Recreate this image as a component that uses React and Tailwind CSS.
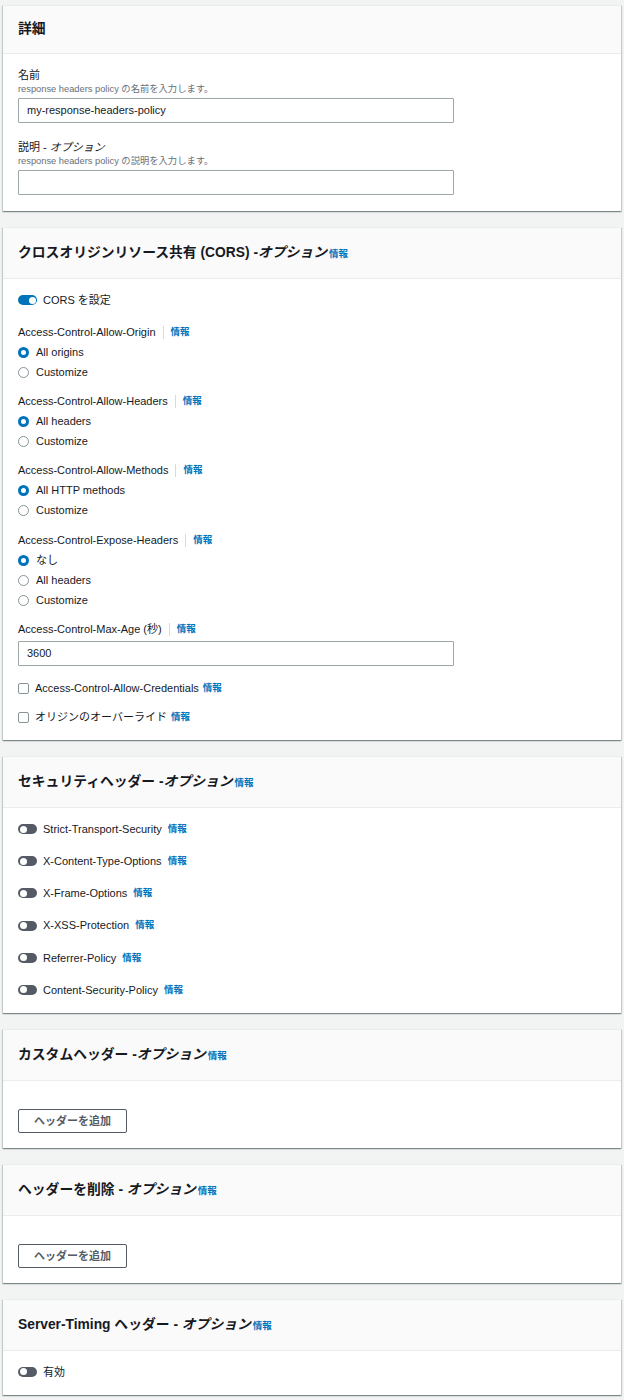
import React from "react";

const F = "font-['Liberation_Sans','Noto_Sans_CJK_JP',sans-serif]";

function Info({ cls = "" }) {
  return <span className={`text-[9.5px] font-bold text-[#0073bb] ${cls}`}>情報</span>;
}

function Card({ title, hCls = "h-[51px]", bodyCls = "", children }) {
  return (
    <div className="bg-white border-t border-[#eaeded] shadow-[0_1px_1px_0_rgba(0,28,36,0.3),1px_1px_1px_0_rgba(0,28,36,0.15),-1px_1px_1px_0_rgba(0,28,36,0.15)]">
      <div className={`${hCls} flex items-center px-[15px] bg-[#fafafa] border-b border-[#eaeded]`}>
        <div className="flex items-baseline text-[13.8px] font-bold text-[#16191f]">{title}</div>
      </div>
      <div className={`px-[15px] ${bodyCls}`}>{children}</div>
    </div>
  );
}

function FieldLabel({ children }) {
  return (
    <div className="h-[20px] flex items-center text-[11px] text-[#16191f]">
      <span>{children}</span>
      <span className="ml-[7px] mr-[7px] w-px h-[13px] bg-[#d5dbdb]" />
      <Info />
    </div>
  );
}

function Radio({ checked, label }) {
  return (
    <div className="h-[20px] flex items-center gap-[7px] text-[11px] text-[#16191f]">
      <span
        className={
          checked
            ? "w-[11px] h-[11px] rounded-full border-[3.5px] border-[#0073bb] bg-white"
            : "w-[11px] h-[11px] rounded-full border border-[#879596] bg-white"
        }
      />
      <span>{label}</span>
    </div>
  );
}

function Toggle({ on }) {
  return (
    <span className={`relative inline-block w-[19px] h-[10px] rounded-full ${on ? "bg-[#0073bb]" : "bg-[#545b64]"}`}>
      <span
        className={`absolute top-[1.5px] w-[7px] h-[7px] rounded-full bg-white ${on ? "right-[1.5px]" : "left-[1.5px]"}`}
      />
    </span>
  );
}

function ToggleRow({ on, label, info = true }) {
  return (
    <div className="h-[20px] flex items-center gap-[6px] text-[11px] text-[#16191f]">
      <Toggle on={on} />
      <span>{label}</span>
      {info && <Info />}
    </div>
  );
}

function Checkbox({ label }) {
  return (
    <div className="h-[20px] flex items-center gap-[6px] text-[11px] text-[#16191f]">
      <span className="w-[11px] h-[11px] rounded-[2px] border border-[#879596] bg-white" />
      <span>{label}</span>
      <Info cls="-ml-[2px]" />
    </div>
  );
}

function Input({ value = "" }) {
  return (
    <div className="w-[436px] h-[25px] flex items-center px-[8px] border border-[#9ba7a6] rounded-[1px] text-[11px] text-[#16191f] bg-white">
      {value}
    </div>
  );
}

function Button({ children }) {
  return (
    <div className="w-[109px] h-[24px] flex items-center justify-center border border-[#545b64] rounded-[2px] text-[11px] font-bold text-[#545b64] bg-white">
      {children}
    </div>
  );
}

export default function App() {
  return (
    <div className={`${F} bg-[#f2f3f3] min-h-[1400px] px-[3px] pt-[5px] pb-[5px] flex flex-col gap-[16px] text-[#16191f]`}>
      {/* 詳細 */}
      <Card title={<span>詳細</span>} hCls="h-[48px]" bodyCls="pt-[13px] pb-[16px]">
        <div className="text-[11px] leading-[16px]">名前</div>
        <div className="text-[9.3px] leading-[12px] text-[#687078]">response headers policy の名前を入力します。</div>
        <div className="mt-[3px]">
          <Input value="my-response-headers-policy" />
        </div>
        <div className="mt-[16px] text-[11px] leading-[16px]">
          説明 - <i>オプション</i>
        </div>
        <div className="text-[9.3px] leading-[12px] text-[#687078]">response headers policy の説明を入力します。</div>
        <div className="mt-[3px]">
          <Input />
        </div>
      </Card>

      {/* CORS */}
      <Card
        title={
          <>
            <span>
              クロスオリジンリソース共有 (CORS) -<i>オプション</i>
            </span>
            <Info cls="ml-[2px]" />
          </>
        }
        bodyCls="pt-[11px] pb-[13px]"
      >
        <ToggleRow on label="CORS を設定" info={false} />
        <div className="mt-[12px]">
          <FieldLabel>Access-Control-Allow-Origin</FieldLabel>
          <Radio checked label="All origins" />
          <Radio label="Customize" />
        </div>
        <div className="mt-[9px]">
          <FieldLabel>Access-Control-Allow-Headers</FieldLabel>
          <Radio checked label="All headers" />
          <Radio label="Customize" />
        </div>
        <div className="mt-[9px]">
          <FieldLabel>Access-Control-Allow-Methods</FieldLabel>
          <Radio checked label="All HTTP methods" />
          <Radio label="Customize" />
        </div>
        <div className="mt-[10px]">
          <FieldLabel>Access-Control-Expose-Headers</FieldLabel>
          <Radio checked label="なし" />
          <Radio label="All headers" />
          <Radio label="Customize" />
        </div>
        <div className="mt-[9px]">
          <FieldLabel>Access-Control-Max-Age (秒)</FieldLabel>
          <div className="mt-[2px]">
            <Input value="3600" />
          </div>
        </div>
        <div className="mt-[12px]">
          <Checkbox label="Access-Control-Allow-Credentials" />
        </div>
        <div className="mt-[9px]">
          <Checkbox label="オリジンのオーバーライド" />
        </div>
      </Card>

      {/* Security headers */}
      <Card
        title={
          <>
            <span>
              セキュリティヘッダー -<i>オプション</i>
            </span>
            <Info cls="ml-[2px]" />
          </>
        }
        bodyCls="pt-[11px] pb-[13px] flex flex-col gap-[12.2px]"
      >
        <ToggleRow label="Strict-Transport-Security" />
        <ToggleRow label="X-Content-Type-Options" />
        <ToggleRow label="X-Frame-Options" />
        <ToggleRow label="X-XSS-Protection" />
        <ToggleRow label="Referrer-Policy" />
        <ToggleRow label="Content-Security-Policy" />
      </Card>

      {/* Custom headers */}
      <Card
        title={
          <>
            <span>
              カスタムヘッダー -<i>オプション</i>
            </span>
            <Info cls="ml-[2px]" />
          </>
        }
        bodyCls="pt-[28px] pb-[15px]"
      >
        <Button>ヘッダーを追加</Button>
      </Card>

      {/* Remove headers */}
      <Card
        title={
          <>
            <span>
              ヘッダーを削除 - <i>オプション</i>
            </span>
            <Info cls="ml-[2px]" />
          </>
        }
        bodyCls="pt-[28px] pb-[15px]"
      >
        <Button>ヘッダーを追加</Button>
      </Card>

      {/* Server-Timing */}
      <Card
        title={
          <>
            <span>
              Server-Timing ヘッダー - <i>オプション</i>
            </span>
            <Info cls="ml-[2px]" />
          </>
        }
        bodyCls="pt-[11px] pb-[13px]"
      >
        <ToggleRow label="有効" info={false} />
      </Card>
    </div>
  );
}
